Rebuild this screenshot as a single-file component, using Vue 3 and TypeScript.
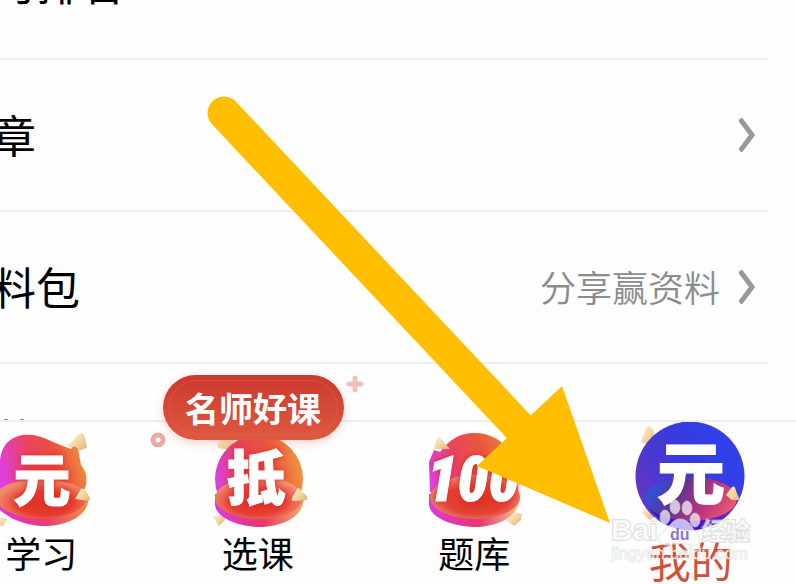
<script setup lang="ts">
interface Row {
  label: string
  note?: string
}

interface Tab {
  label: string
  icon: 'study' | 'course' | 'bank' | 'mine'
  badge?: string
  active?: boolean
}

const rows: Row[] = [
  { label: '学习排名' },
  { label: '文章' },
  { label: '资料包', note: '分享赢资料' },
  { label: '推荐' },
]

const tabs: Tab[] = [
  { label: '学习', icon: 'study' },
  { label: '选课', icon: 'course', badge: '名师好课' },
  { label: '题库', icon: 'bank' },
  { label: '我的', icon: 'mine', active: true },
]
</script>

<template>
  <div class="page">
    <main class="content">
      <ul class="list">
        <li v-for="row in rows" :key="row.label">
          <a class="row" href="#">
            <span class="row-label">{{ row.label }}</span>
            <span v-if="row.note" class="row-note">{{ row.note }}</span>
            <svg class="chevron" viewBox="0 0 16 34" aria-hidden="true">
              <path d="M1 1 L13 17 L1 33" fill="none" stroke="#999" stroke-width="5" />
            </svg>
          </a>
        </li>
      </ul>
    </main>

    <nav class="tabs">
      <a v-for="tab in tabs" :key="tab.label" class="tab" :class="{ active: tab.active }" href="#">
        <svg v-if="tab.icon === 'study'" class="icon" viewBox="0 0 116 110" aria-hidden="true">
          <defs>
            <linearGradient id="s-body" x1="0" y1="0.5" x2="1" y2="0.3">
              <stop offset="0" stop-color="#df3fe0" />
              <stop offset="0.35" stop-color="#ea4463" />
              <stop offset="0.65" stop-color="#e8503c" />
              <stop offset="1" stop-color="#f3923f" />
            </linearGradient>
            <linearGradient id="s-rim" x1="0" y1="0" x2="1" y2="0">
              <stop offset="0" stop-color="#d936dc" />
              <stop offset="0.5" stop-color="#ea3a72" />
              <stop offset="1" stop-color="#f0903f" />
            </linearGradient>
            <radialGradient id="s-top" cx="0.52" cy="0.6" r="0.56">
              <stop offset="0" stop-color="#df3023" />
              <stop offset="0.55" stop-color="#e63c30" />
              <stop offset="1" stop-color="#f08a66" />
            </radialGradient>
            <linearGradient id="gold" x1="0" y1="0" x2="1" y2="1">
              <stop offset="0" stop-color="#fbf0d4" />
              <stop offset="0.5" stop-color="#f4d8a4" />
              <stop offset="1" stop-color="#dfb075" />
            </linearGradient>
          </defs>
          <path d="M84 23 Q91 20 94 13 Q100 9 102 15 L104 26 L94 29 Z" fill="url(#gold)" />
          <path d="M17 95 L24 97 L20 104 L17 104 Z" fill="url(#gold)" />
          <path d="M17 40 C18 18 34 11 50 13 C62 15 73 22 88 27 Q91 22 95 27 L98 43 C108 55 104 71 91 80 L17 76 Z" fill="url(#s-body)" />
          <path d="M17 70 L105 72 C109 94 82 105 58 104 C39 103 25 95 17 88 Z" fill="url(#s-rim)" />
          <path d="M17 67 C34 53 88 54 104 71 C106 91 75 97 58 97 C42 97 25 92 17 84 Z" fill="url(#s-top)" />
          <path d="M92 77 L98 67 Q101 65 103 70 L107 76 L106 79 Z" fill="url(#gold)" />
          <text class="mark shade" x="59" y="79" font-size="57">元</text>
        </svg>

        <svg v-else-if="tab.icon === 'course'" class="icon" viewBox="0 0 116 110" aria-hidden="true">
          <defs>
            <linearGradient id="c-body" x1="0" y1="0.5" x2="1" y2="0.3">
              <stop offset="0" stop-color="#d941e4" />
              <stop offset="0.35" stop-color="#ea435c" />
              <stop offset="0.65" stop-color="#ea5a3b" />
              <stop offset="1" stop-color="#f09742" />
            </linearGradient>
            <linearGradient id="c-rim" x1="0" y1="0" x2="1" y2="0">
              <stop offset="0" stop-color="#d63bdd" />
              <stop offset="0.55" stop-color="#e83964" />
              <stop offset="1" stop-color="#f0b363" />
            </linearGradient>
            <radialGradient id="c-top" cx="0.48" cy="0.6" r="0.56">
              <stop offset="0" stop-color="#e02f27" />
              <stop offset="0.55" stop-color="#e74035" />
              <stop offset="1" stop-color="#f19478" />
            </radialGradient>
          </defs>
          <path d="M17 22 L21 18 L34 18 L31 28 L18 26 Z" fill="url(#gold)" />
          <path d="M12 93 Q18 96 23 92 L25 98 L19 104 Z" fill="url(#gold)" />
          <circle cx="59" cy="57" r="44" fill="url(#c-body)" />
          <path d="M15 72 L104 72 C106 94 84 105 58 105 C34 104 15 94 15 82 Z" fill="url(#c-rim)" />
          <ellipse cx="59" cy="76" rx="44" ry="21" fill="url(#c-top)" />
          <path d="M92 76 L97 67 Q99 64 101 69 L107 74 L107 78 L92 79 Z" fill="url(#gold)" />
          <text class="mark shade" x="56" y="78" font-size="59">抵</text>
        </svg>

        <svg v-else-if="tab.icon === 'bank'" class="icon" viewBox="0 0 116 110" aria-hidden="true">
          <defs>
            <linearGradient id="b-body" x1="0" y1="0.6" x2="1" y2="0.3">
              <stop offset="0" stop-color="#df3fe8" />
              <stop offset="0.35" stop-color="#e8455c" />
              <stop offset="0.65" stop-color="#ea573b" />
              <stop offset="1" stop-color="#ef8b40" />
            </linearGradient>
            <linearGradient id="b-rim" x1="0" y1="0" x2="1" y2="0">
              <stop offset="0" stop-color="#dd3ae0" />
              <stop offset="0.55" stop-color="#e6376c" />
              <stop offset="1" stop-color="#f2c98d" />
            </linearGradient>
            <radialGradient id="b-top" cx="0.52" cy="0.55" r="0.56">
              <stop offset="0" stop-color="#dc3024" />
              <stop offset="0.6" stop-color="#e54233" />
              <stop offset="1" stop-color="#ee8a78" />
            </radialGradient>
          </defs>
          <path d="M14 70 L13 40 L18 28 L24 30 C34 17 44 11 58 11 C82 11 98 27 100 49 L103 75 Z" fill="url(#b-body)" />
          <path d="M18 27 L21 16 Q23 13 26 18 L34 27 Z" fill="url(#gold)" />
          <path d="M13 72 L104 72 C106 94 82 105 57 105 C33 104 13 94 13 82 Z" fill="url(#b-rim)" />
          <ellipse cx="59" cy="75" rx="45" ry="22" fill="url(#b-top)" />
          <path d="M90 98 L99 90 L106 92 L105 98 L98 104 Z" fill="url(#gold)" />
          <text class="mark digits shade" x="57" y="79" font-size="62">100</text>
        </svg>

        <svg v-else class="icon" viewBox="0 0 116 110" aria-hidden="true">
          <defs>
            <linearGradient id="m-body" x1="0" y1="0.7" x2="0.8" y2="0.2">
              <stop offset="0" stop-color="#6a35bd" />
              <stop offset="0.3" stop-color="#4d38cf" />
              <stop offset="0.65" stop-color="#383adf" />
              <stop offset="1" stop-color="#3140e8" />
            </linearGradient>
            <linearGradient id="m-top" x1="0" y1="0.3" x2="1" y2="0.6">
              <stop offset="0" stop-color="#2855ee" />
              <stop offset="0.35" stop-color="#5f348f" />
              <stop offset="0.7" stop-color="#bd367e" />
              <stop offset="1" stop-color="#eb5a72" />
            </linearGradient>
            <linearGradient id="m-rim" x1="0" y1="0" x2="1" y2="0">
              <stop offset="0" stop-color="#2518c8" />
              <stop offset="0.6" stop-color="#4817cb" />
              <stop offset="1" stop-color="#7a24c4" />
            </linearGradient>
          </defs>
          <path d="M8 20 L13 6 Q16 2 20 7 L22 16 L15 23 Z" fill="url(#gold)" />
          <path d="M9 91 L13 85 L22 94 L17 98 Z" fill="url(#gold)" />
          <circle cx="57" cy="54" r="54.5" fill="url(#m-body)" />
          <path d="M12 76 C14 91 36 108 57 108 C77 108 96 96 102 80 Z" fill="url(#m-rim)" />
          <ellipse cx="58" cy="77" rx="46" ry="22" fill="url(#m-top)" />
          <path d="M93 73 L99 65 Q102 63 103 69 L107 78 L99 78 Z" fill="url(#gold)" />
          <text class="mark" x="58" y="77" font-size="68">元</text>
        </svg>

        <span class="tab-label">{{ tab.label }}</span>

        <span v-if="tab.badge" class="badge">{{ tab.badge }}</span>
        <svg v-if="tab.badge" class="sparks" viewBox="0 0 216 72" aria-hidden="true">
          <path d="M205 3 V15 M199 9 H211" stroke="#f1c0bb" stroke-width="5" stroke-linecap="round" fill="none" />
          <circle cx="8" cy="65" r="5" stroke="#eba9a3" stroke-width="5" fill="none" />
        </svg>
      </a>
    </nav>

    <svg class="arrow" viewBox="0 0 403 428" aria-hidden="true">
      <path d="M17 17 L312 331" stroke="#ffbf00" stroke-width="33" stroke-linecap="round" />
      <path d="M355 290 L403 427 L270 370 Z" fill="#ffbf00" />
    </svg>

    <svg class="watermark" viewBox="0 0 150 72" aria-hidden="true">
      <g class="paw">
        <ellipse cx="54" cy="20" rx="5" ry="7" />
        <ellipse cx="64" cy="10" rx="5" ry="7" />
        <ellipse cx="76" cy="11" rx="5" ry="7" />
        <ellipse cx="84" cy="23" rx="5" ry="7" />
        <path d="M69 22 C79 22 80 31 86 36 C92 43 88 50 80 48 C74 46 66 46 59 48 C50 50 44 43 50 37 C59 31 60 22 69 22 Z" />
      </g>
      <text class="wm-big" x="0" y="43" font-size="30">Bai</text>
      <text class="wm-du" x="59" y="43" font-size="16">du</text>
      <text class="wm-cn" x="91" y="43" font-size="24">经验</text>
      <text class="wm-url" x="0" y="62" font-size="17">jingyan.baidu.com</text>
    </svg>
  </div>
</template>

<style>
body {
  margin: 0;
  background: #fefefe;
}
</style>

<style scoped>
.page {
  position: relative;
  display: flex;
  flex-direction: column;
  height: 100vh;
  overflow: hidden;
  background: #fefefe;
  color: #000;
  font-family: 'Noto Sans CJK SC', sans-serif;
}

.content {
  flex: 1;
  min-height: 0;
  overflow: hidden;
}

.list {
  margin: -92px 28px 0 -52px;
  padding: 0;
  list-style: none;
}

.row {
  display: flex;
  align-items: center;
  box-sizing: border-box;
  height: 152px;
  padding-right: 13px;
  border-bottom: 2px solid #ededed;
  color: inherit;
  text-decoration: none;
}

.row-label {
  flex: 1;
  padding-bottom: 2px;
  font-size: 44px;
  line-height: 64px;
}

.row-note {
  margin-right: 19px;
  padding-bottom: 2px;
  color: #8c8c8c;
  font-size: 36px;
  font-weight: 350;
}

.chevron {
  width: 16px;
  height: 34px;
}

.tabs {
  position: relative;
  display: grid;
  grid-template-columns: repeat(4, 1fr);
  box-sizing: border-box;
  height: 164px;
  margin: 0 -3px 0 -67px;
  border-top: 2px solid #ededed;
  background: #fefefe;
}

.tab {
  position: relative;
  display: flex;
  flex-direction: column;
  align-items: center;
  color: inherit;
  text-decoration: none;
}

.icon {
  flex: none;
  width: 116px;
  height: 110px;
}

.mark {
  fill: #fff;
  stroke: #fff;
  stroke-width: 1px;
  font-family: 'Noto Sans CJK SC', sans-serif;
  font-weight: 900;
  text-anchor: middle;
}

.digits {
  font-family: 'Liberation Sans Narrow', 'Roboto Condensed', 'Liberation Sans', sans-serif;
  font-style: italic;
}

.shade {
  filter: drop-shadow(0 0 3px #dd2a24);
}

.tab-label {
  font-size: 36px;
  line-height: 40px;
}

.active .tab-label {
  color: #d2503a;
  font-size: 42px;
  line-height: 56px;
}

.badge {
  position: absolute;
  top: -47px;
  left: 13px;
  box-sizing: border-box;
  width: 181px;
  border-radius: 33px;
  background: linear-gradient(#cc382d, #df5941);
  box-shadow: 0 3px 10px #e0503c40;
  color: #fff;
  font-size: 34px;
  font-weight: 700;
  line-height: 65px;
  text-align: center;
}

.badge::after {
  position: absolute;
  inset: 5px 6px;
  border: 1px solid #e0695f70;
  border-radius: 28px;
  content: '';
}

.sparks {
  position: absolute;
  top: -47px;
  left: 0;
  width: 216px;
  height: 72px;
}

.arrow {
  position: absolute;
  top: 96px;
  left: 207px;
  width: 403px;
  height: 428px;
}

.watermark {
  position: absolute;
  right: 35px;
  bottom: 15px;
  width: 150px;
  height: 72px;
  overflow: visible;
}

.watermark text {
  fill: #fff;
  fill-opacity: 0.7;
  stroke: #c9c9c9;
  stroke-opacity: 0.6;
  stroke-width: 2px;
  paint-order: stroke;
  font-family: 'Liberation Sans', 'Noto Sans CJK SC', sans-serif;
}

.watermark .wm-big,
.watermark .wm-cn {
  font-weight: 700;
}

.watermark .wm-du {
  fill: #5b33cc;
  stroke: none;
  font-weight: 700;
}

.watermark .wm-url {
  stroke-width: 1px;
}

.paw {
  fill: #fff;
  fill-opacity: 0.7;
  stroke: #d0d0d0;
  stroke-opacity: 0.6;
}
</style>
